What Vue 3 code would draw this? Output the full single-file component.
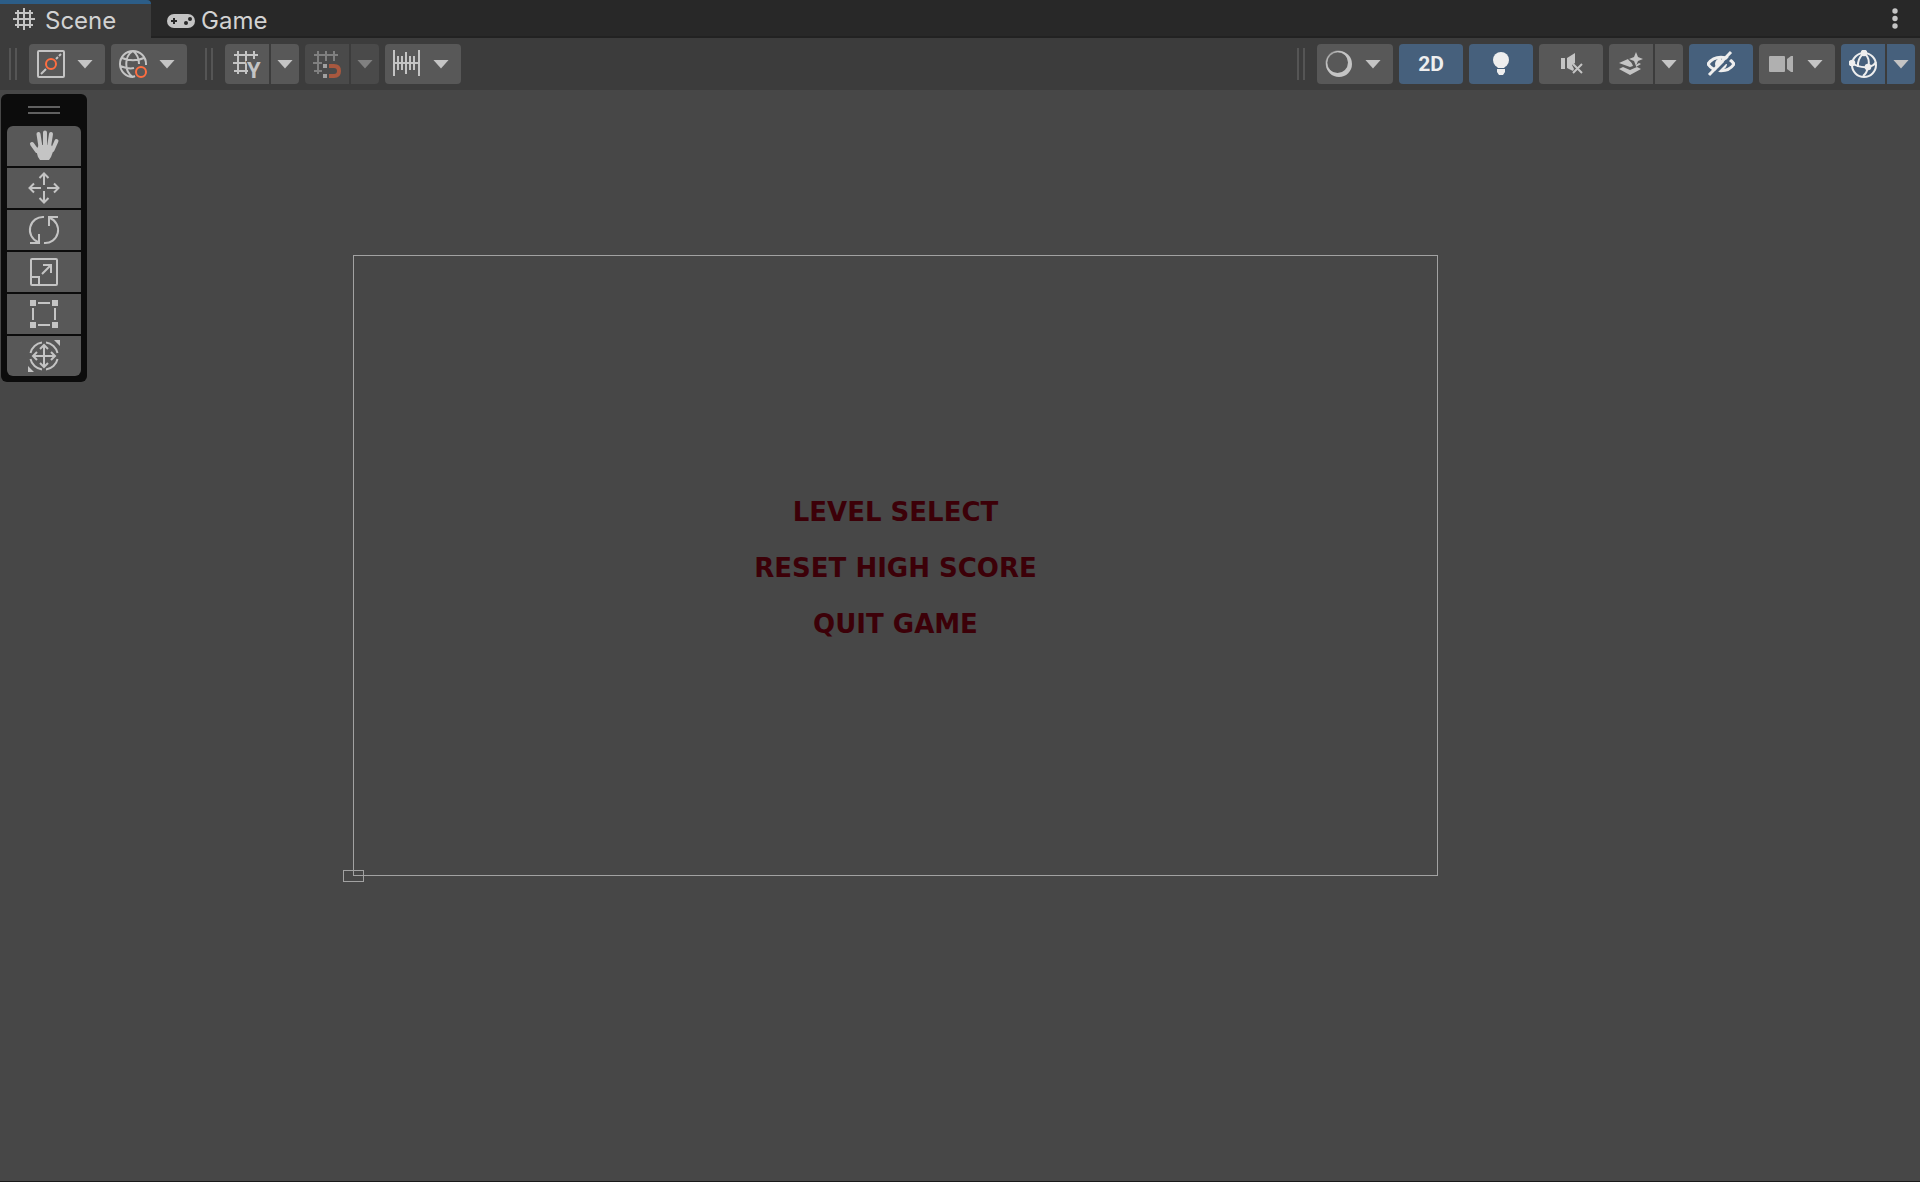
<script setup>
import { ref } from 'vue'

const activeTool = ref('')
const tools = ['Hand', 'Move', 'Rotate', 'Scale', 'Rect', 'Transform']
const menu = ['LEVEL SELECT', 'RESET HIGH SCORE', 'QUIT GAME']
</script>

<template>
  <div class="editor">
    <nav class="tabs">
      <button class="tab active" type="button">
        <svg width="22" height="22" viewBox="0 0 22 22" fill="none" stroke="currentColor" stroke-width="2">
          <path d="M5 2v18M11 0v22M17 2v18M2 5h18M0 11h22M2 17h18" />
        </svg>
        <span>Scene</span>
      </button>
      <button class="tab game" type="button">
        <svg width="28" height="14" viewBox="0 0 28 14">
          <rect width="28" height="14" rx="7" fill="currentColor" />
          <path d="M4 7h6M7 4v6" stroke="#282828" stroke-width="2" />
          <circle cx="23" cy="5" r="2" fill="#282828" />
          <circle cx="19" cy="9" r="2" fill="#282828" />
        </svg>
        <span>Game</span>
      </button>
      <button class="more" type="button" aria-label="More options">
        <svg width="6" height="22" viewBox="0 0 6 22" fill="currentColor">
          <circle cx="3" cy="3" r="2.7" /><circle cx="3" cy="10.5" r="2.7" /><circle cx="3" cy="18" r="2.7" />
        </svg>
      </button>
    </nav>

    <header class="toolbar">
      <div class="group">
        <i class="grip"></i>
        <button class="btn drop" type="button" aria-label="Tool handle position">
          <svg width="28" height="28" viewBox="0 0 28 28" fill="none" stroke="currentColor" stroke-width="2">
            <rect x="1" y="1" width="26" height="26" rx="1" />
            <path d="M4 24l5-5M19 9l2-2M22 6l2-2" />
            <circle cx="14" cy="14" r="5" stroke="#ff6e40" />
          </svg>
          <i class="arrow"></i>
        </button>
        <button class="btn drop" type="button" aria-label="Tool handle rotation">
          <svg width="28" height="28" viewBox="0 0 28 28" fill="none" stroke="currentColor" stroke-width="2">
            <path d="M27 14A13 13 0 1 0 14 27M14 27C5 22 5 6 14 1M14 1c4 3 6 7 6 13M3 8c6 3 16 3 22 0M1 16c5 2 10 3 14 2" />
            <path d="M14 27l2-1M27 14v1" />
            <circle cx="22" cy="22" r="5" stroke="#ff6e40" />
          </svg>
          <i class="arrow"></i>
        </button>
      </div>
      <div class="group">
        <i class="grip"></i>
        <div class="split">
          <button class="btn icon" type="button" aria-label="Grid visibility">
            <svg class="grid" width="28" height="28" viewBox="0 0 28 28" fill="none" stroke="currentColor" stroke-width="2">
              <path d="M5 1v23M13 1v23M21 1v8M1 5h24M0 13h12M1 21h14" />
              <text x="14" y="28" class="axis">Y</text>
            </svg>
          </button>
          <button class="btn more-arrow" type="button" aria-label="Grid options"><i class="arrow"></i></button>
        </div>
        <div class="split off">
          <button class="btn icon" type="button" aria-label="Grid snapping" disabled>
            <svg width="28" height="28" viewBox="0 0 28 28" fill="none" stroke="#808080" stroke-width="2">
              <path d="M5 1v23M13 1v10M21 1v10M1 5h24M0 13h9M1 21h8" />
              <path d="M10 16h4M10 26h4" stroke="#a0a0a0" stroke-width="4" />
              <path d="M16 16h5q5 0 5 5t-5 5h-5" stroke="#a8583f" stroke-width="4" />
            </svg>
          </button>
          <button class="btn more-arrow" type="button" aria-label="Snapping options" disabled><i class="arrow"></i></button>
        </div>
        <button class="btn drop" type="button" aria-label="Snap increment">
          <svg width="28" height="28" viewBox="0 0 28 28" fill="none" stroke="currentColor" stroke-width="2">
            <path d="M1 0v26M26 0v26M5 6v14M9 6v14M13 2v22M17 6v14M21 6v14M1 13h25" />
          </svg>
          <i class="arrow"></i>
        </button>
      </div>

      <div class="group right">
        <i class="grip"></i>
        <button class="btn drop" type="button" aria-label="Draw mode">
          <svg width="28" height="28" viewBox="0 0 28 28">
            <circle cx="13" cy="13" r="11.5" fill="none" stroke="#909090" stroke-width="2" />
            <path d="M14 1a13 13 0 1 1 0 26a13 13 0 1 1 0-26zM12.500 2a10.500 10.500 0 1 0 0 21a10.500 10.500 0 1 0 0-21z" fill="currentColor" fill-rule="evenodd" />
          </svg>
          <i class="arrow"></i>
        </button>
        <button class="btn wide on label" type="button">2D</button>
        <button class="btn wide on" type="button" aria-label="Scene lighting">
          <svg width="28" height="28" viewBox="0 0 28 28" fill="currentColor">
            <circle cx="14" cy="10" r="8" /><path d="M9 15h10l-2 3h-6zM10 19h8v3l-2 3h-4l-2-3z" />
          </svg>
        </button>
        <button class="btn wide" type="button" aria-label="Scene audio">
          <svg width="28" height="28" viewBox="0 0 28 28" fill="currentColor">
            <path d="M4 8h4v11H4zM10 8l8-5v10l-3 2 2 4-1 2-6-3z" />
            <path d="M16 14l9 9M25 14l-9 9" stroke="currentColor" stroke-width="2" />
          </svg>
        </button>
        <div class="split">
          <button class="btn icon" type="button" aria-label="Scene effects">
            <svg width="28" height="28" viewBox="0 0 28 28" fill="currentColor">
              <path d="M19 2l2 5 5 2-5 2-2 5-2-5-5-2 5-2z" />
              <path d="M11 9c1 2 4 3 5 7l-3 1-11-4zM2 19l4-2 7 3 7-3 4 2-11 6z" />
              <path d="M19 17l5-3-2-1-3 2z" />
            </svg>
          </button>
          <button class="btn more-arrow" type="button" aria-label="Effect options"><i class="arrow"></i></button>
        </div>
        <button class="btn wide on" type="button" aria-label="Hidden objects">
          <svg width="28" height="28" viewBox="0 0 28 28" fill="none" stroke="currentColor">
            <path d="M1 14C7 5 21 5 27 14C21 23 7 23 1 14Z" stroke-width="3" />
            <path d="M14 9a5 5 0 1 0 5 5" fill="currentColor" stroke-width="2" />
            <path d="M5 26L27 4" stroke="#46607c" stroke-width="3" />
            <path d="M2 25L24 2" stroke-width="3" />
          </svg>
        </button>
        <button class="btn drop" type="button" aria-label="Scene camera">
          <svg width="28" height="28" viewBox="0 0 28 28" fill="currentColor">
            <rect x="2" y="6" width="16" height="16" rx="1" fill="#b0b0b0" />
            <path d="M20 9l4-3h2v16h-2l-4-3z" fill="#b0b0b0" />
          </svg>
          <i class="arrow"></i>
        </button>
        <div class="split">
          <button class="btn icon on" type="button" aria-label="Gizmos">
            <svg width="28" height="28" viewBox="0 0 28 28" fill="none" stroke="currentColor" stroke-width="2">
              <circle cx="15" cy="15" r="12" />
              <path d="M15 3Q8 9 9 17M15 3q7 6 4 14M3 13q7 5 16 4q6-1 8-5M19 17q-1 6-5 9" />
              <g fill="currentColor" stroke="none">
                <circle cx="15" cy="3" r="3.3" /><circle cx="3" cy="13" r="3.3" /><circle cx="19" cy="17" r="3.3" />
              </g>
            </svg>
          </button>
          <button class="btn more-arrow on" type="button" aria-label="Gizmo options"><i class="arrow"></i></button>
        </div>
      </div>
    </header>

    <main class="view">
      <aside class="palette">
        <i class="bars"></i>
        <button v-for="t in tools" :key="t" class="tool" type="button" :aria-label="t + ' tool'" :aria-pressed="activeTool === t" @click="activeTool = t">
          <svg width="32" height="32" viewBox="0 0 32 32" fill="none" stroke="currentColor" stroke-width="2">
            <template v-if="t === 'Hand'">
              <path d="M4 14l5 7M10.5 4l2 13M17 2.500V17M23 4l-2 13M28.500 11l-4 9" stroke-width="4" stroke-linecap="round" />
              <path d="M8 20l3-5h12l3 4-3 8-2 3H12l-2-3z" fill="currentColor" stroke="none" />
            </template>
            <path v-else-if="t === 'Move'" d="M16 2v11M16 19v11M2 16h11M19 16h11M11.500 6L16 1.500 20.500 6M11.500 26l4.500 4.500 4.500-4.500M6 11.500L1.500 16 6 20.500M26 11.500l4.500 4.500-4.500 4.500" />
            <path v-else-if="t === 'Rotate'" d="M16 3A13 13 0 0 0 10 28M2 29h9v-9M16 29A13 13 0 0 0 22 4M30 3h-9v9" />
            <template v-else-if="t === 'Scale'">
              <rect x="3" y="3" width="26" height="26" rx="1" />
              <path d="M3 21h8v8M14 18l9-9M15 9h8v8" />
            </template>
            <template v-else-if="t === 'Rect'">
              <path d="M10 5h12M10 27h12M5 10v12M27 10v12" />
              <path d="M2 2h6v6H2zM24 2h6v6h-6zM2 24h6v6H2zM24 24h6v6h-6z" fill="currentColor" stroke="none" />
            </template>
            <template v-else>
              <path d="M14 2.500A13.500 13.500 0 0 0 2.500 13M18 2.500A13.500 13.500 0 0 1 29.500 13M14 29.500A13.500 13.500 0 0 1 2.500 19M18 29.500A13.500 13.500 0 0 0 29.500 19" />
              <path d="M16 6v20M6 16h20M12 9l4-4 4 4M12 23l4 4 4-4M9 12l-4 4 4 4M23 12l4 4-4 4" />
              <path d="M26 0h6v6zM0 26v6h6z" fill="currentColor" stroke="none" />
            </template>
          </svg>
        </button>
      </aside>

      <section class="canvas">
        <i class="camera"></i>
        <button v-for="m in menu" :key="m" class="entry" type="button">{{ m }}</button>
      </section>
    </main>
  </div>
</template>

<style>
body {
  margin: 0;
  background: #474747;
}
</style>

<style scoped>
.editor {
  display: flex;
  flex-direction: column;
  min-height: 100vh;
  box-sizing: border-box;
  border-bottom: 1px solid #191919;
  background: #474747;
  color: #c4c4c4;
  font-family: Inter, "Liberation Sans", sans-serif;
}
button {
  margin: 0;
  padding: 0;
  border: 0;
  background: none;
  color: inherit;
  font: inherit;
}
svg {
  display: block;
  flex: none;
}
.tabs {
  display: flex;
  height: 38px;
  background: linear-gradient(#282828 36px, #222 36px);
}
.tab {
  display: flex;
  align-items: center;
  box-sizing: border-box;
  font-size: 24px;
  line-height: 32px;
}
.tab span {
  color: #d2d2d2;
}
.tab.active {
  width: 151px;
  gap: 10px;
  padding-left: 13px;
  border-top: 4px solid #2c5d87;
  border-radius: 0 4px 0 0;
  background: #3c3c3c;
}
.tab.active svg {
  margin-bottom: 4px;
}
.tab.game {
  gap: 6px;
  margin-left: 16px;
  padding-top: 4px;
}
.more {
  display: flex;
  align-items: flex-start;
  margin-left: auto;
  padding: 8px 22px 0 0;
}
.toolbar {
  display: flex;
  align-items: center;
  gap: 18px;
  height: 52px;
  padding: 0 5px 0 9px;
  background: #3c3c3c;
}
.group {
  display: flex;
  align-items: center;
  gap: 6px;
}
.right {
  margin-left: auto;
}
.grip {
  width: 2px;
  height: 32px;
  margin-right: 6px;
  border: solid #555;
  border-width: 0 2px;
}
.split {
  display: flex;
  gap: 2px;
}
.btn {
  display: flex;
  align-items: center;
  justify-content: center;
  height: 40px;
  border-radius: 4px;
  background: #585858;
}
.drop {
  gap: 12px;
  width: 76px;
  padding-right: 4px;
  box-sizing: border-box;
}
.group:first-child {
  gap: 6px;
}
.wide {
  width: 64px;
}
.icon {
  width: 44px;
  border-radius: 4px 0 0 4px;
}
.more-arrow {
  width: 28px;
  border-radius: 0 4px 4px 0;
}
.off .btn {
  background: #4a4a4a;
  color: #808080;
}
.on {
  background: #46607c;
  color: #eee;
}
.on .arrow {
  color: #c4c4c4;
}
.label {
  font: bold 21px/24px Roboto, sans-serif;
}
.grid {
  overflow: visible;
}
.axis {
  fill: #c4c4c4;
  stroke: #585858;
  stroke-width: 2px;
  paint-order: stroke;
  font: bold 22px Roboto, sans-serif;
}
.arrow {
  width: 16px;
  height: 9px;
  background: currentColor;
  clip-path: polygon(0 0, 100% 0, 50% 100%);
}
.grip {
  box-sizing: content-box;
  width: 4px;
}
.view {
  position: relative;
  flex: 1;
  padding: 4px 1px;
}
.palette {
  display: flex;
  flex-direction: column;
  gap: 2px;
  width: 74px;
  padding: 12px 6px 6px;
  border-radius: 6px;
  background: #0c0c0c;
}
.bars {
  align-self: center;
  width: 32px;
  height: 4px;
  margin-bottom: 10px;
  border: solid #606060;
  border-width: 2px 0;
}
.tool {
  display: flex;
  align-items: center;
  justify-content: center;
  height: 40px;
  background: #585858;
}
.tool:first-of-type {
  border-radius: 6px 6px 0 0;
}
.tool:last-of-type {
  border-radius: 0 0 6px 6px;
}
.canvas {
  position: absolute;
  top: 165px;
  left: 353px;
  display: flex;
  flex-direction: column;
  align-items: center;
  justify-content: center;
  gap: 24px;
  box-sizing: border-box;
  width: 1085px;
  height: 621px;
  padding-top: 4px;
  border: 1px solid #a2a2a2;
}
.camera {
  position: absolute;
  bottom: -7px;
  left: -11px;
  width: 19px;
  height: 10px;
  border: 1px solid #a2a2a2;
}
.entry {
  color: #3c0008;
  font: bold 26px/32px "DejaVu Sans", sans-serif;
}
</style>
